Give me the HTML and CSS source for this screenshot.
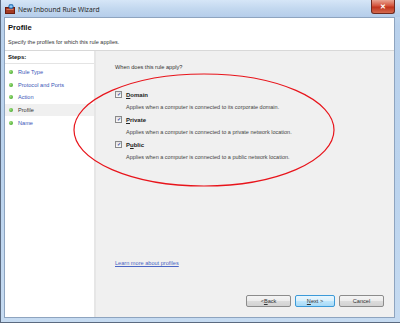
FILE: index.html
```html
<!DOCTYPE html>
<html>
<head>
<meta charset="utf-8">
<link rel="stylesheet" href="styles.css">
</head>
<body>
<div class="window">
  <div class="titlebar">
    <svg class="appicon" width="10" height="10" viewBox="0 0 10 10">
      <rect x="0.5" y="3.5" width="9" height="6" fill="#a33a22" stroke="#6b1d10"/>
      <rect x="1.5" y="5" width="7" height="1" fill="#d9765c"/>
      <circle cx="6" cy="2.5" r="2.3" fill="#3d8fd6" stroke="#1b5e9e" stroke-width="0.6"/>
      <path d="M4.5 2.5h3M6 1v3" stroke="#bfe3ff" stroke-width="0.6"/>
    </svg>
    <span class="title">New Inbound Rule Wizard</span>
    <div class="close">✕</div>
  </div>
  <div class="client">
    <div class="header">
      <div class="h-title">Profile</div>
      <div class="h-sub">Specify the profiles for which this rule applies.</div>
    </div>
    <div class="main">
      <div class="steps">
        <div class="steps-head">Steps:</div>
        <div class="step"><span class="dot"></span>Rule Type</div>
        <div class="step"><span class="dot"></span>Protocol and Ports</div>
        <div class="step"><span class="dot"></span>Action</div>
        <div class="step current"><span class="dot"></span>Profile</div>
        <div class="step"><span class="dot"></span>Name</div>
      </div>
      <div class="content">
        <div class="question">When does this rule apply?</div>
        <div class="opt">
          <div class="opt-row"><span class="cb">✓</span><span class="opt-label"><u>D</u>omain</span></div>
          <div class="opt-desc">Applies when a computer is connected to its corporate domain.</div>
        </div>
        <div class="opt">
          <div class="opt-row"><span class="cb">✓</span><span class="opt-label"><u>P</u>rivate</span></div>
          <div class="opt-desc">Applies when a computer is connected to a private network location.</div>
        </div>
        <div class="opt">
          <div class="opt-row"><span class="cb">✓</span><span class="opt-label">P<u>u</u>blic</span></div>
          <div class="opt-desc">Applies when a computer is connected to a public network location.</div>
        </div>
        <div class="spacer"></div>
        <a class="learn">Learn more about profiles</a>
        <div class="buttons">
          <div class="btn">&lt; <u>B</u>ack</div>
          <div class="btn default"><u>N</u>ext &gt;</div>
          <div class="btn cancel">Cancel</div>
        </div>
      </div>
    </div>
  </div>
  <svg class="ellipse" width="400" height="323" viewBox="0 0 400 323">
    <ellipse cx="203" cy="130" rx="130" ry="56" fill="none" stroke="#e8141b" stroke-width="1.2"/>
  </svg>
</div>
</body>
</html>
```
FILE: styles.css
```css
* { box-sizing: border-box; }
html, body { margin: 0; padding: 0; }
body {
  width: 400px;
  height: 323px;
  overflow: hidden;
  font-family: "Liberation Sans", Arial, sans-serif;
  color: #1e1e1e;
}
.window {
  position: relative;
  width: 400px;
  height: 323px;
  display: flex;
  flex-direction: column;
  background: linear-gradient(180deg, #c8dcf1 0%, #b9d1ec 8%, #bcd4ee 60%, #c6dbf1 100%);
  border-left: 1px solid #5b6a80;
  border-bottom: 1px solid #5b6a80;
}
.titlebar {
  height: 17px;
  flex: none;
  display: flex;
  align-items: center;
  padding-left: 4px;
  background: linear-gradient(180deg, #d6e6f7 0%, #c3d8ef 50%, #b5cdea 100%);
}
.appicon { flex: none; }
.title {
  margin-left: 3px;
  font-family: "Noto Sans", "Liberation Sans", sans-serif;
  font-size: 6.7px;
  color: #2a2a2a;
  margin-top: 1px;
}
.close {
  margin-left: auto;
  margin-right: 5px;
  width: 24px;
  height: 14px;
  margin-top: -3px;
  border: 1px solid #6e2a20;
  border-top: none;
  border-radius: 0 0 3px 3px;
  background: linear-gradient(180deg, #e8a492 0%, #d4533c 45%, #c1341d 55%, #d46a4e 100%);
  color: #fff;
  font-size: 7px;
  font-weight: bold;
  display: flex;
  align-items: center;
  justify-content: center;
}
.client {
  flex: 1;
  margin: 0 5px 4px 3px;
  background: #fff;
  border: 1px solid #8ea4bf;
  display: flex;
  flex-direction: column;
}
.header {
  height: 33px;
  flex: none;
  background: #fff;
  border-bottom: 1px solid #d8d8d8;
  padding: 5px 0 0 3px;
}
.h-title {
  font-weight: bold;
  font-size: 7.6px;
  color: #111;
  line-height: 10px;
}
.h-sub {
  margin-top: 5px;
  font-size: 5.5px;
  color: #333;
  line-height: 8px;
}
.main {
  flex: 1;
  display: flex;
}
.steps {
  width: 91px;
  flex: none;
  background: #fff;
  border-right: 2px solid #e6e6e6;
  padding-top: 2px;
}
.steps-head {
  font-weight: bold;
  font-size: 6px;
  color: #111;
  padding: 1px 0 0 3px;
  height: 11px;
  border-bottom: 1px solid #e4e4e4;
  margin-bottom: 2px;
}
.step {
  height: 12.6px;
  display: flex;
  align-items: center;
  font-size: 5.6px;
  color: #3a56b8;
  padding-left: 4px;
}
.step.current {
  background: #f0f0f0;
  color: #333;
}
.dot {
  width: 4px;
  height: 4px;
  border-radius: 50%;
  background: radial-gradient(circle at 35% 35%, #9fe07a, #2f9a1c);
  margin-right: 5px;
  flex: none;
}
.content {
  flex: 1;
  background: #f0f0f0;
  display: flex;
  flex-direction: column;
  padding: 12px 0 10px 19px;
}
.question {
  font-size: 5.6px;
  color: #333;
  line-height: 8px;
  margin-bottom: 19px;
}
.opt { margin-bottom: 4px; }
.opt-row {
  display: flex;
  align-items: center;
  height: 9px;
}
.cb {
  width: 7px;
  height: 7px;
  border: 1px solid #8a8a8a;
  background: linear-gradient(180deg, #e4e4e4, #fafafa);
  font-size: 5px;
  line-height: 5px;
  color: #24339a;
  text-align: center;
  font-weight: bold;
  margin-right: 4px;
  flex: none;
}
.opt-label {
  font-size: 6px;
  font-weight: bold;
  color: #222;
}
.opt-label u { text-decoration-thickness: 0.5px; }
.opt-desc {
  margin-left: 11px;
  margin-top: 5px;
  font-size: 5.5px;
  color: #444;
  line-height: 7px;
}
.spacer { flex: 1; }
.learn {
  font-size: 5.6px;
  color: #4b66c4;
  text-decoration: underline;
  line-height: 8px;
  margin-bottom: 28px;
}
.buttons {
  display: flex;
  justify-content: flex-end;
  gap: 4px;
  margin-right: 10px;
}
.btn {
  width: 45px;
  height: 12px;
  border: 1px solid #8c8c8c;
  border-radius: 2px;
  background: linear-gradient(180deg, #f4f4f4 0%, #ececec 50%, #dcdcdc 51%, #d2d2d2 100%);
  font-size: 5.6px;
  color: #333;
  display: flex;
  align-items: center;
  justify-content: center;
}
.btn.default {
  width: 40px;
  border-color: #3c9ad8;
  background: linear-gradient(180deg, #eaf6fd 0%, #d9f0fc 50%, #bee6fd 51%, #a7d9f5 100%);
}
.ellipse {
  position: absolute;
  left: 0;
  top: 0;
  pointer-events: none;
}
```
